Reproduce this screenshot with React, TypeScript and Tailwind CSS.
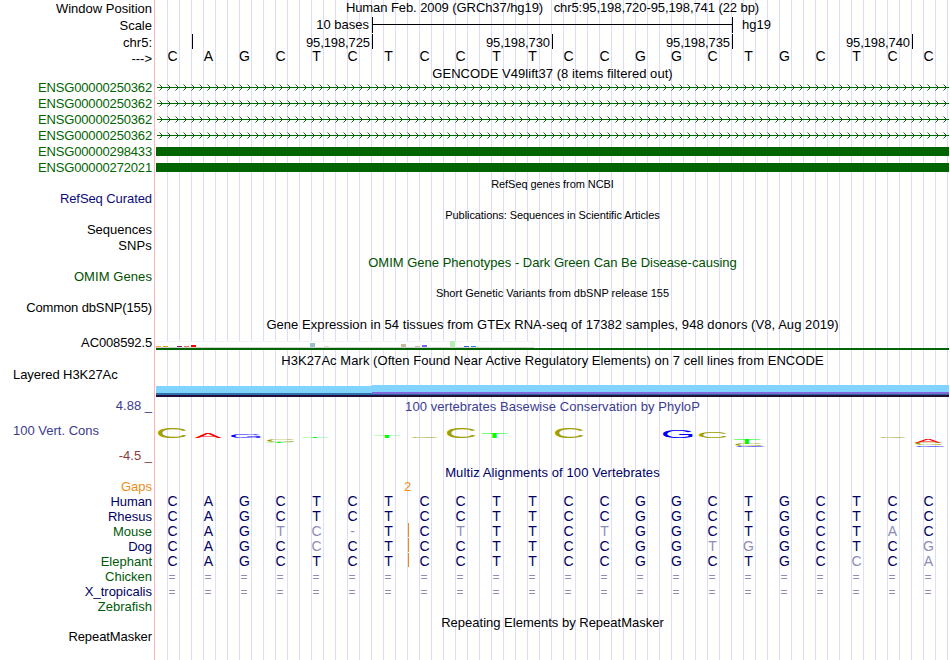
import React from 'react';
import clsx from 'clsx';

interface Label {
  text: string;
  className: string;
}

const leftLabels: Label[] = [
  { text: 'Window Position', className: 'mt-px' },
  { text: 'Scale', className: 'mt-0.5' },
  { text: 'chr5:', className: 'mt-0.5' },
  { text: '--->', className: 'pt-px' },
  { text: 'ENSG00000250362', className: 'mt-[15px] text-[#006400] tracking-[-0.16px]' },
  { text: 'ENSG00000250362', className: 'mt-px text-[#006400] tracking-[-0.16px]' },
  { text: 'ENSG00000250362', className: 'mt-px text-[#006400] tracking-[-0.16px]' },
  { text: 'ENSG00000250362', className: 'mt-px text-[#006400] tracking-[-0.16px]' },
  { text: 'ENSG00000298433', className: 'mt-px text-[#006400] tracking-[-0.16px]' },
  { text: 'ENSG00000272021', className: 'mt-px text-[#006400] tracking-[-0.16px]' },
  { text: 'RefSeq Curated', className: 'mt-4 text-[#0c0c78] tracking-[-0.08px]' },
  { text: 'Sequences', className: 'mt-4' },
  { text: 'SNPs', className: 'mt-px tracking-[0.15px]' },
  { text: 'OMIM Genes', className: 'mt-4 text-[#005000] tracking-[0.08px]' },
  { text: 'Common dbSNP(155)', className: 'mt-4 tracking-[-0.12px]' },
  { text: 'AC008592.5', className: 'mt-5 tracking-[-0.14px]' },
  { text: 'Layered H3K27Ac', className: 'mt-[17px] self-start pl-[13px] tracking-[-0.06px]' },
  { text: '4.88 _', className: 'mt-4 text-[#3c3c8c]' },
  { text: '100 Vert. Cons', className: 'mt-2.5 self-start pl-[13px] text-[#3c3c8c]' },
  { text: '-4.5 _', className: 'mt-2.5 text-[#8c3c3c]' },
  { text: 'Gaps', className: 'mt-4 text-[#f08c14]' },
  { text: 'Human', className: 'text-[#000064] tracking-[-0.1px]' },
  { text: 'Rhesus', className: 'text-[#000064]' },
  { text: 'Mouse', className: 'text-[#005a0a]' },
  { text: 'Dog', className: 'text-[#000064]' },
  { text: 'Elephant', className: 'text-[#005a0a]' },
  { text: 'Chicken', className: 'text-[#005a0a]' },
  { text: 'X_tropicalis', className: 'text-[#000064]' },
  { text: 'Zebrafish', className: 'text-[#005a0a]' },
  { text: 'RepeatMasker', className: 'mt-[15px] tracking-[-0.08px]' },
];

const human = 'CAGCTCTCCTTCCGGCTGCTCC';

const alignments = [
  { species: 'Human', seq: human, gap: false },
  { species: 'Rhesus', seq: human, gap: false },
  { species: 'Mouse', seq: 'CAGTC-TCTTTCTGGCTGCTAC', gap: true },
  { species: 'Dog', seq: 'CAGCCCTCCTTCCGGTGGCTCG', gap: true },
  { species: 'Elephant', seq: 'CAGCTCTCCTTCCGGCTGCCCA', gap: true },
  { species: 'Chicken', seq: '======================', gap: false },
  { species: 'X_tropicalis', seq: '======================', gap: false },
];

const positions = ['95,198,725', '95,198,730', '95,198,735', '95,198,740'];

const gtexBars = [
  { x: 0, h: 1, color: '#ffa54f' },
  { x: 7, h: 1, color: '#ee9a00' },
  { x: 21, h: 1, color: '#8b1c62' },
  { x: 28, h: 1, color: '#ee6a50' },
  { x: 35, h: 2, color: '#ff0000' },
  { x: 154, h: 4, color: '#9ac0cd' },
  { x: 168, h: 1, color: '#eed5d2' },
  { x: 245, h: 3, color: '#cdb79e' },
  { x: 259, h: 1, color: '#cdb79e' },
  { x: 266, h: 2, color: '#7a67ee' },
  { x: 294, h: 6, color: '#b4eeb4' },
  { x: 308, h: 1, color: '#3a5fcd' },
  { x: 315, h: 1, color: '#1e90ff' },
];

// ink extents of the logo letters at font-size 10
const ink = {
  A: { x: 0.02, w: 6.63, bottom: 0, h: 6.88, color: '#ff0000' },
  C: { x: 0.5, w: 6.33, bottom: 0.1, h: 7.08, color: '#a0a000' },
  G: { x: 0.5, w: 6.7, bottom: 0.1, h: 7.08, color: '#0000ff' },
  T: { x: 0.2, w: 5.7, bottom: 0, h: 6.88, color: '#00ff00' },
};

interface LogoLetter {
  base: keyof typeof ink;
  x: number;
  y: number;
  w: number;
  h: number;
}

const logo: LogoLetter[] = [
  { base: 'C', x: 2, y: 0, w: 28.5, h: 10 },
  { base: 'A', x: 38.5, y: 5, w: 27, h: 5 },
  { base: 'G', x: 75, y: 6, w: 30, h: 4 },
  { base: 'C', x: 111, y: 11, w: 28, h: 3 },
  { base: 'T', x: 110, y: 14, w: 26, h: 1 },
  { base: 'T', x: 146, y: 9, w: 26, h: 1 },
  { base: 'T', x: 218, y: 7, w: 26, h: 3 },
  { base: 'C', x: 255.5, y: 9, w: 27, h: 1 },
  { base: 'C', x: 291, y: 0, w: 28.5, h: 10 },
  { base: 'T', x: 325.5, y: 5, w: 26, h: 5 },
  { base: 'C', x: 399, y: 0, w: 28.5, h: 10 },
  { base: 'G', x: 507, y: 2, w: 30, h: 8 },
  { base: 'C', x: 543, y: 4, w: 28, h: 6 },
  { base: 'T', x: 578, y: 11, w: 26, h: 5 },
  { base: 'C', x: 579.5, y: 16, w: 27, h: 2 },
  { base: 'G', x: 580, y: 18, w: 29, h: 1 },
  { base: 'C', x: 723.5, y: 9, w: 27, h: 1 },
  { base: 'A', x: 758.5, y: 11, w: 27, h: 4 },
  { base: 'C', x: 759.5, y: 15, w: 27, h: 2.5 },
  { base: 'G', x: 759.5, y: 17.7, w: 29.5, h: 1.3 },
];

const Title: React.FC<{ text: string; className?: string }> = ({ text, className }) => (
  <div className={clsx('h-[15px] text-center whitespace-pre', className)}>{text}</div>
);

const Bases: React.FC<{ seq: string; compare?: boolean; gap?: boolean }> = ({ seq, compare, gap }) => (
  <div className="grid h-[15px] grid-cols-[repeat(22,36px)] text-center">
    {seq.split('').map((base, i) => (
      <div
        key={i}
        className={clsx(
          'relative',
          base === '=' ? 'pt-px pr-1 text-[12px]' : 'pr-[3px] text-[14px]',
          compare && (base === human[i] ? 'text-[#000064]' : 'text-[#8c8cb9]')
        )}
      >
        {base}
        {gap && i === 7 && <span className="absolute -top-px left-0 h-[14px] w-px bg-[#f08c14]" />}
      </div>
    ))}
  </div>
);

const Transcript: React.FC<{ className?: string }> = ({ className }) => (
  <svg className={clsx('block', className)} width="793" height="9" fill="none" stroke="#006400">
    <path d="M1 4.5H793" />
    {Array.from({ length: 99 }, (_, i) => (
      <path key={i} d={`M${3.5 + i * 8} 1.5l3 3l-3 3`} />
    ))}
  </svg>
);

const Expression = () => (
  <svg className="mt-[9px] block" width="793" height="9" shapeRendering="crispEdges">
    <rect x="0" y="0" width="378" height="7" fill="#f3f3f3" />
    <rect x="0" y="1" width="377" height="5" fill="#ffffff" />
    <rect x="0" y="6" width="378" height="1" fill="#d3d3d3" />
    {gtexBars.map((bar) => (
      <rect key={bar.x} x={bar.x} y={6 - bar.h} width="5" height={bar.h} fill={bar.color} />
    ))}
    <rect x="0" y="7" width="793" height="2" fill="#006400" />
  </svg>
);

const Histone = () => (
  <svg className="mt-[17px] block" width="793" height="12" shapeRendering="crispEdges">
    <rect x="0" y="1" width="216" height="7" fill="#80d4ff" />
    <rect x="0" y="8" width="216" height="2" fill="#3070b0" />
    <rect x="216" y="0" width="577" height="7" fill="#80d4ff" />
    <rect x="216" y="7" width="577" height="2" fill="#7f68d8" />
    <rect x="216" y="9" width="577" height="1" fill="#3060a0" />
    <rect x="0" y="10" width="793" height="2" fill="#200f38" />
  </svg>
);

const Conservation = () => (
  <svg className="mt-[14px] block overflow-visible" width="793" height="20" fontSize="10">
    {logo.map(({ base, x, y, w, h }, i) => {
      const m = ink[base];
      const sx = w / m.w;
      const sy = h / m.h;
      return (
        <text
          key={i}
          fill={m.color}
          transform={`translate(${x - m.x * sx} ${y + h - m.bottom * sy}) scale(${sx} ${sy})`}
        >
          {base}
        </text>
      );
    })}
  </svg>
);

const App = () => {
  return (
    <div className="flex h-[660px] w-[950px] overflow-hidden bg-white font-['Liberation_Sans',sans-serif] text-[13px] leading-[15px] text-black">
      {/* Track labels */}
      <div className="flex w-[154px] flex-col items-end pr-0.5">
        {leftLabels.map((label, i) => (
          <div key={i} className={clsx('h-[15px] whitespace-pre', label.className)}>
            {label.text}
          </div>
        ))}
      </div>
      <div className="mr-px w-px bg-[#ffb4b4]" />

      {/* Tracks */}
      <div className="w-[793px] bg-[repeating-linear-gradient(to_right,transparent_0px,transparent_11px,#dcdcff_11px,#dcdcff_12px)]">
        <Title
          className="tracking-[-0.08px]"
          text="Human Feb. 2009 (GRCh37/hg19)   chr5:95,198,720-95,198,741 (22 bp)"
        />

        <div className="mt-0.5 flex h-4">
          <div className="w-[217px] border-r border-black pr-[3px] text-right">10 bases</div>
          <div className="flex w-[360px] items-center border-r border-black">
            <div className="mb-px h-px w-full bg-black" />
          </div>
          <div className="pl-[9px]">hg19</div>
        </div>

        <div className="mt-px flex h-[15px]">
          <div className="w-[37px] border-r border-black" />
          {positions.map((position) => (
            <div
              key={position}
              className="w-[180px] border-r border-black pt-px pr-0.5 text-right tracking-[-0.1px]"
            >
              {position}
            </div>
          ))}
        </div>

        <Bases seq={human} />

        <Title className="mt-0.5 tracking-[0.05px]" text="GENCODE V49lift37 (8 items filtered out)" />
        <Transcript className="mt-0.5" />
        <Transcript className="mt-[7px]" />
        <Transcript className="mt-[7px]" />
        <Transcript className="mt-[7px]" />
        <div className="mt-[7px] h-[9px] bg-[#006400]" />
        <div className="mt-[7px] h-[9px] bg-[#006400]" />

        <Title className="mt-[5px] text-[11px] tracking-[-0.07px]" text="RefSeq genes from NCBI" />
        <Title
          className="mt-4 text-[11px] tracking-[-0.07px]"
          text="Publications: Sequences in Scientific Articles"
        />
        <Title
          className="mt-8 text-[#005000]"
          text="OMIM Gene Phenotypes - Dark Green Can Be Disease-causing"
        />
        <Title className="mt-4 text-[11px]" text="Short Genetic Variants from dbSNP release 155" />
        <Title
          className="mt-4 tracking-[0.055px]"
          text="Gene Expression in 54 tissues from GTEx RNA-seq of 17382 samples, 948 donors (V8, Aug 2019)"
        />
        <Expression />

        <Title
          className="mt-[3px] tracking-[0.055px]"
          text="H3K27Ac Mark (Often Found Near Active Regulatory Elements) on 7 cell lines from ENCODE"
        />
        <Histone />

        <Title
          className="mt-0.5 tracking-[0.06px] text-[#3c3c8c]"
          text="100 vertebrates Basewise Conservation by PhyloP"
        />
        <Conservation />

        <Title
          className="mt-[17px] mb-[-1px] tracking-[0.1px] text-[#000064]"
          text="Multiz Alignments of 100 Vertebrates"
        />
        <div className="h-[15px] pl-[248px] text-[#f08c14]">2</div>
        {alignments.map((row) => (
          <Bases key={row.species} seq={row.seq} gap={row.gap} compare />
        ))}

        <Title className="mt-4" text="Repeating Elements by RepeatMasker" />
      </div>
    </div>
  );
};

export default App;
